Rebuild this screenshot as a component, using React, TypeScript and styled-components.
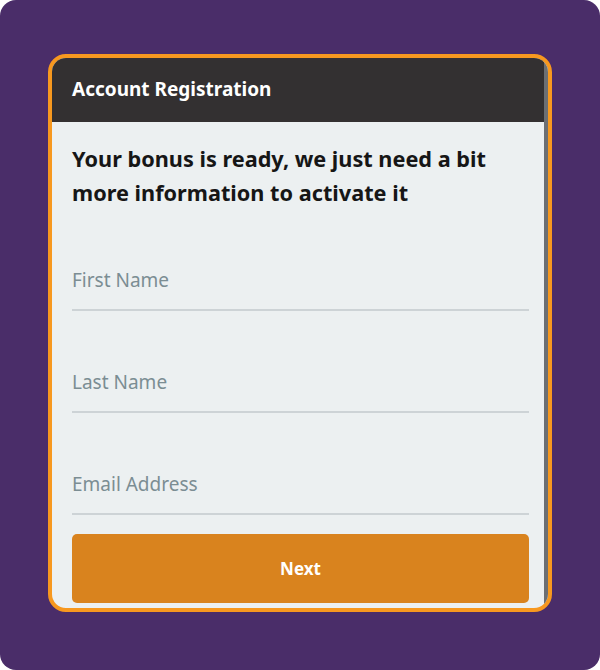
import React from 'react';
import styled, { createGlobalStyle } from 'styled-components';

const GlobalStyle = createGlobalStyle`
  html, body {
    margin: 0;
    padding: 0;
    background: #ffffff;
  }
  * {
    box-sizing: border-box;
  }
`;

const Page = styled.div`
  width: 600px;
  height: 670px;
  background: #4a2d69;
  border-radius: 16px;
  padding: 54px 48px 0 48px;
  font-family: 'Noto Sans', 'Open Sans', sans-serif;
`;

const Card = styled.div`
  height: 558px;
  border: 4px solid #f7981f;
  border-radius: 18px;
  overflow: hidden;
  display: flex;
  background: #ecf0f1;
`;

const Scroller = styled.div`
  flex: 1;
  display: flex;
  flex-direction: column;
  min-width: 0;
`;

const ScrollBar = styled.div`
  width: 4px;
  background: #6c6f73;
`;

const Header = styled.div`
  height: 64px;
  flex-shrink: 0;
  background: #333031;
  display: flex;
  align-items: center;
  padding: 0 20px 2px;
  color: #ffffff;
  font-size: 19px;
  font-weight: 700;
  line-height: 1;
`;

const Body = styled.div`
  padding: 20px 15px 0 20px;
  display: flex;
  flex-direction: column;
`;

const Title = styled.h2`
  margin: 0 0 47px;
  font-size: 21.7px;
  line-height: 34px;
  font-weight: 700;
  color: #161616;
`;

const Field = styled.input`
  display: block;
  width: 100%;
  border: none;
  border-bottom: 2px solid #cdd3d6;
  background: transparent;
  padding: 10px 0 16px;
  font-family: inherit;
  font-size: 19px;
  line-height: 26px;
  color: #34495e;
  outline: none;
  margin-bottom: 48px;

  &::placeholder {
    color: #7b8d93;
  }

  &:last-of-type {
    margin-bottom: 19px;
  }
`;

const NextButton = styled.button`
  height: 69px;
  border: none;
  border-radius: 5px;
  background: #d9831e;
  color: #ffffff;
  font-family: inherit;
  font-size: 17px;
  font-weight: 700;
  cursor: pointer;
`;

export default function App() {
  return (
    <>
      <GlobalStyle />
      <Page>
        <Card>
          <Scroller>
            <Header>Account Registration</Header>
            <Body>
              <Title>Your bonus is ready, we just need a bit more information to activate it</Title>
              <Field type="text" placeholder="First Name" />
              <Field type="text" placeholder="Last Name" />
              <Field type="email" placeholder="Email Address" />
              <NextButton type="button">Next</NextButton>
            </Body>
          </Scroller>
          <ScrollBar />
        </Card>
      </Page>
    </>
  );
}
